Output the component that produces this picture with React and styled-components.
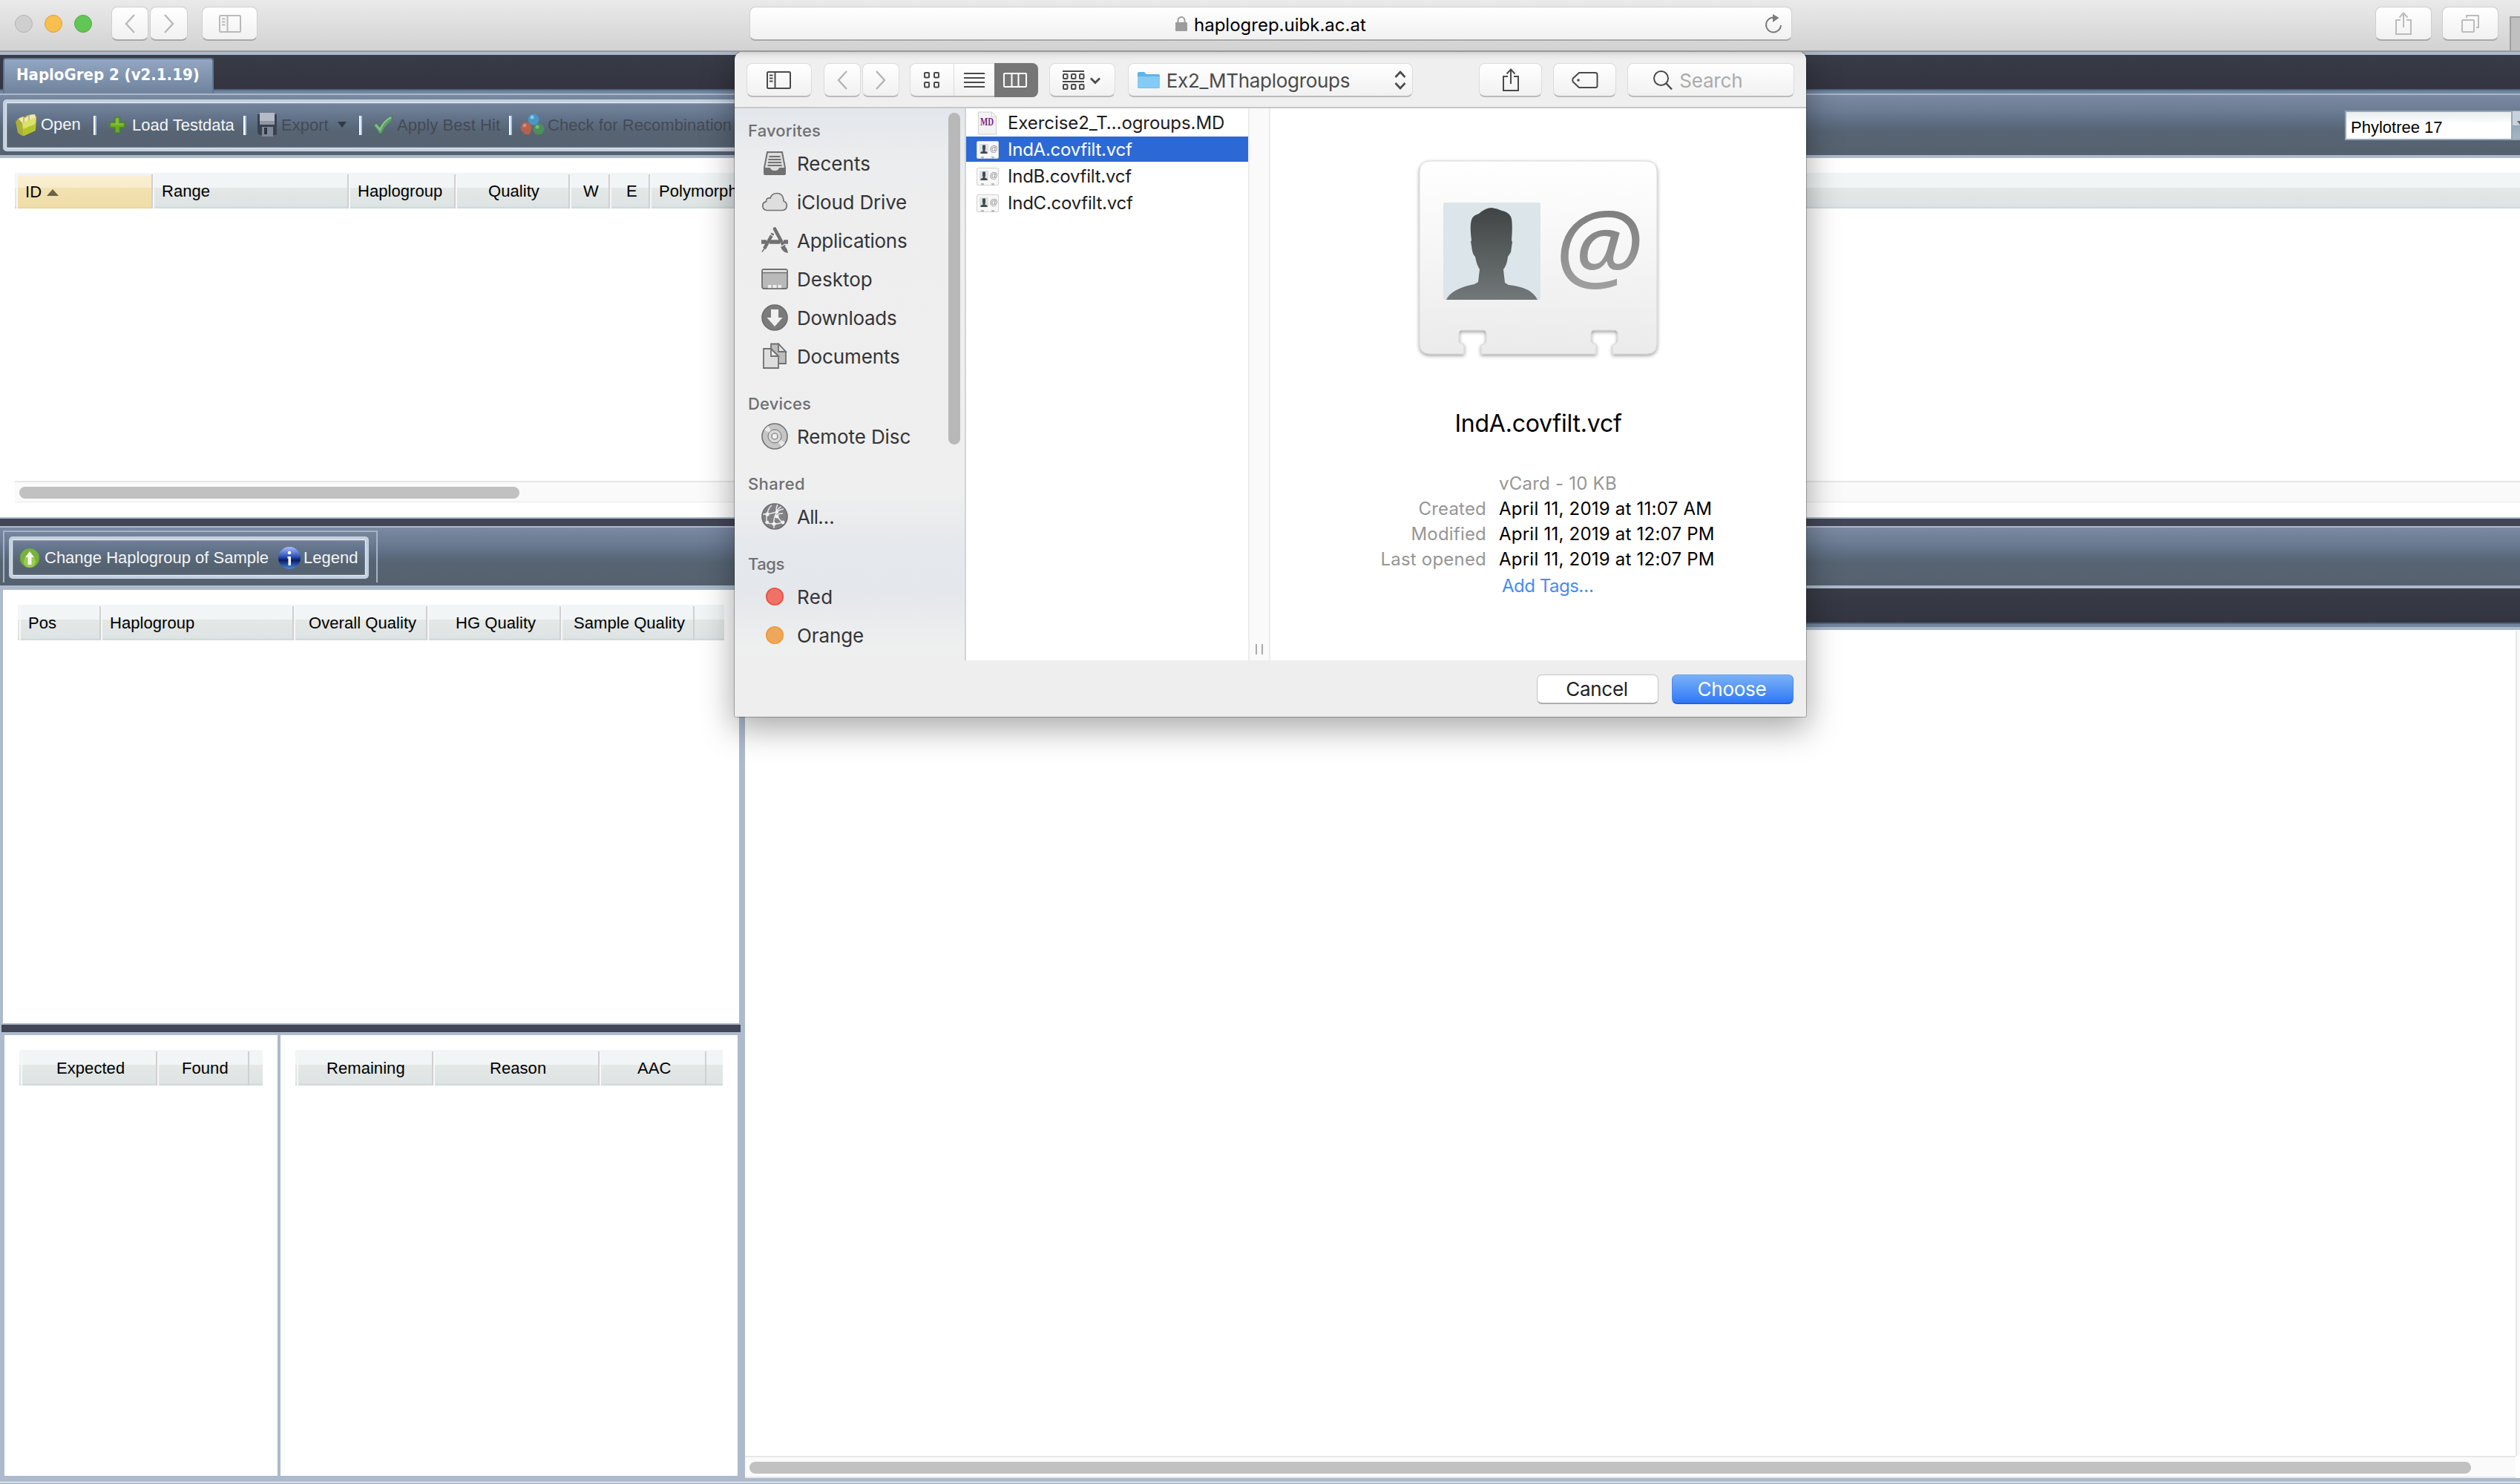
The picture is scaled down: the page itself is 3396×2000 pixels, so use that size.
import React from "react";
import styled, { createGlobalStyle, css } from "styled-components";

const UI = `Inter, "Liberation Sans", sans-serif`;
const APP = `"Liberation Sans", Arial, sans-serif`;
const LINE = "#adbacc";

const Global = createGlobalStyle`
  * { box-sizing: border-box; }
  body { margin: 0; background: #fff; font-family: ${APP}; }
  svg { display: block; flex: none; }
`;

const Screen = styled.div`
  position: relative;
  width: 3396px;
  height: 2000px;
  overflow: hidden;
  display: flex;
  flex-direction: column;
  background: #fff;
`;

/* ---------- text ---------- */
const Label = styled.span`
  white-space: nowrap;
  letter-spacing: ${(p) => p.$ls || 0}px;
`;

/* ---------- browser chrome ---------- */
const BrowserBar = styled.header`
  height: 70px;
  flex: none;
  display: flex;
  align-items: flex-start;
  padding: 9px 0 0 20px;
  background: linear-gradient(#eaeaea, #d2d2d2);
  border-bottom: 2px solid #9a9a9a;
`;
const Lights = styled.div`
  display: flex;
  gap: 16px;
  padding-top: 11px;
  width: 130px;
`;
const Light = styled.i`
  width: 24px;
  height: 24px;
  border-radius: 50%;
  background: ${(p) => p.$fill};
  border: 1px solid ${(p) => p.$edge};
`;
const button = css`
  display: flex;
  align-items: center;
  justify-content: center;
  height: 46px;
  background: linear-gradient(#fff, #f1f1f1);
  border: 1px solid #cfcfcf;
  border-bottom: 2px solid #a9a9a9;
  border-radius: 8px;
`;
const ChromeButton = styled.div`
  ${button}
  width: ${(p) => p.$w}px;
  margin-right: ${(p) => p.$gap || 0}px;
`;
const Address = styled.div`
  ${button}
  width: 1405px;
  margin-left: 663px;
  padding: 0 12px 0 572px;
  justify-content: flex-start;
  font: 24px/45px ${UI};
  color: #000;
`;
const AddressText = styled(Label)`
  margin-left: 8px;
  margin-right: auto;
  padding-top: 3px;
`;
const ChromeRight = styled.div`
  display: flex;
  margin-left: auto;
`;
const TabStub = styled.div`
  width: 14px;
  height: 46px;
  margin-top: 13px;
  background: #c0c0c0;
  border: 2px solid #a0a0a0;
  border-width: 2px 0 0 2px;
`;

/* ---------- web page ---------- */
const TabStrip = styled.div`
  height: 58px;
  flex: none;
  display: flex;
  align-items: flex-end;
  padding-left: 4px;
  background: linear-gradient(#383c47, #33343f 46px, #536480 46px, #536480 48px, #7286a0 48px);
  background-clip: padding-box;
  border-top: 4px solid ${LINE};
  border-bottom: 2px solid #aab8c9;
  ${(p) => p.$plain && css`height: 60px; border-bottom-width: 4px;`}
`;
const Tab = styled.div`
  height: 48px;
  width: 284px;
  padding-left: 16px;
  font: bold 22px/42px "DejaVu Sans Condensed", "DejaVu Sans", sans-serif;
  color: #fff;
  background: linear-gradient(#94a7c2, #7286a0 90%);
  border: 2px solid #5e7695;
  border-bottom: 0;
  border-radius: 4px 4px 0 0;
`;
const bar = css`
  background: linear-gradient(#7b89a3, #6d7d93 25%, #64748c 36%, #566473 60%, #56616f);
`;
const MainBar = styled.div`
  ${bar}
  height: 85px;
  flex: none;
  display: flex;
  align-items: flex-start;
  padding-top: 6px;
  padding-left: 4px;
  border-bottom: 4px solid ${LINE};
`;
const Tools = styled.div`
  display: flex;
  align-items: center;
  height: 70px;
  border: 4px solid #c3d0df;
  border-radius: 5px;
  box-shadow: inset 0 0 0 1px #e8eef6, inset 0 0 3px #fff;
  font-size: 22px;
`;
const ToolRow = styled(Tools)`
  width: 1040px;
  padding: 0 0 3px 12px;
`;
const Tool = styled.div`
  display: flex;
  align-items: center;
  width: ${(p) => p.$w}px;
  flex: none;
  line-height: 26px;
  color: ${(p) => (p.$off ? "#444a55" : "#f4f5f7")};
`;
const ToolText = styled(Label)`
  margin-left: ${(p) => p.$x}px;
  padding-top: ${(p) => p.$y || 0}px;
`;
const Sep = styled.i`
  width: 4px;
  height: 26px;
  margin-top: 2px;
  margin-right: ${(p) => p.$gap}px;
  flex: none;
  background: linear-gradient(90deg, #fff 60%, #9ec2f3 60%);
`;
const Combo = styled.div`
  display: flex;
  margin: 15px 0 0 auto;
`;
const ComboField = styled.div`
  width: 226px;
  height: 40px;
  padding: 4px 0 0 6px;
  border: 2px solid #98a7bc;
  background: linear-gradient(#e8eded, #fff 45%);
  font-size: 22px;
  line-height: 33px;
  color: #000;
`;
const ComboArrow = styled.div`
  width: 10px;
  height: 40px;
  overflow: hidden;
  display: flex;
  align-items: center;
  padding: 0 0 4px 6px;
  border: 1px solid #98a7bc;
  border-width: 1px 0 2px;
  background: linear-gradient(#c9d2dc 50%, #94a6b8 50%, #a5b6c6);
`;
const GridArea = styled.section`
  height: 484px;
  flex: none;
  display: flex;
  flex-direction: column;
  justify-content: space-between;
  padding: 20px 0 20px 20px;
`;
const Head = styled.div`
  display: flex;
  height: 48px;
  flex: none;
  width: ${(p) => (p.$w ? p.$w + "px" : "auto")};
  padding-left: 2px;
  background: linear-gradient(#f1f5f6 20px, #e4e8e6 20px, #dee4e4 45px, #d2dbdb 46px);
`;
const HeadCell = styled.div`
  width: ${(p) => p.$w}px;
  flex: none;
  margin-top: 2px;
  padding-left: ${(p) => p.$x}px;
  border-left: 2px solid #f7f7f7;
  border-right: 2px solid #d0d0d0;
  font-size: 22px;
  line-height: 45px;
  letter-spacing: 0.06px;
  white-space: nowrap;
  color: #000;
  ${(p) =>
    p.$sorted &&
    css`
      display: flex;
      align-items: center;
      background: linear-gradient(#eef2f8 2px, #faefd4 2px, #f8ecca 18px, #f3e2b1 18px, #efdda9 44px, #e8d193);
    `}
`;
const SortArrow = styled.i`
  margin: 3px 0 0 7px;
  border: 8px solid transparent;
  border-top: 0;
  border-bottom: 9px solid #6e6149;
`;
const ScrollTrack = styled.div`
  display: flex;
  flex: none;
  height: ${(p) => p.$h || 29}px;
  padding: 6px 0 0 ${(p) => p.$x}px;
  background: #fafafa;
  border-top: 2px solid #e7e7e7;
  border-bottom: ${(p) => p.$bb || 1}px solid #e9e9e9;
`;
const ScrollThumb = styled.i`
  width: ${(p) => p.$w}px;
  height: 16px;
  border-radius: 8px;
  background: #c1c1c1;
`;
const Splitter = styled.div`
  height: 14px;
  flex: none;
  background: #424555;
  border: 2px solid ${LINE};
  border-width: 2px 0;
`;
const SecondBar = styled.div`
  ${bar}
  height: 78px;
  flex: none;
  display: flex;
  padding: 4px 0 0 4px;
`;
const ToolFrame = styled.div`
  width: 505px;
  height: 70px;
  padding: 6px;
  border: 2px solid #a5b3c7;
  border-bottom: 0;
`;
const SampleTools = styled(Tools)`
  width: 485px;
  height: 57px;
  padding-left: 10px;
`;
const Lower = styled.div`
  flex: 1;
  display: flex;
  min-height: 0;
`;
const LeftCol = styled.div`
  width: 1004px;
  flex: none;
  display: flex;
  flex-direction: column;
  background: ${LINE};
  padding-top: 6px;
`;
const HitPanel = styled.div`
  height: 584px;
  flex: none;
  margin: 0 8px 0 4px;
  padding: 20px;
  background: #fff;
`;
const DarkSplit = styled.div`
  height: 10px;
  flex: none;
  margin: 2px 6px 4px 2px;
  background: #424555;
`;
const Pair = styled.div`
  flex: 1;
  display: flex;
  gap: 4px;
  padding: 0 10px 8px 6px;
`;
const PairPanel = styled.div`
  width: ${(p) => p.$w}px;
  padding: 20px;
  background: #fff;
`;
const RightCol = styled.div`
  flex: 1;
  display: flex;
  flex-direction: column;
`;
const Canvas = styled.div`
  flex: 1;
  display: flex;
  justify-content: flex-end;
  padding-top: 1px;
`;
const VTrack = styled.div`
  width: 6px;
  background: #f9f9f9;
  border-left: 2px solid #e7e7e7;
`;
const CanvasFoot = styled.div`
  padding-right: 6px;
  border-bottom: 5px solid ${LINE};
  background: #fff;
`;
const PageEnd = styled.div`
  height: 3px;
  flex: none;
  background: ${LINE};
  border-top: 1px solid #fff;
`;

/* ---------- file dialog ---------- */
const DialogLayer = styled.div`
  position: absolute;
  left: 990px;
  top: 70px;
  width: 1444px;
  clip-path: inset(0 -120px -140px -120px);
`;
const Dialog = styled.div`
  height: 896px;
  display: flex;
  flex-direction: column;
  border-radius: 10px 10px 2px 2px;
  background: #eee;
  overflow: hidden;
  font-family: ${UI};
`;
const DialogShadow = styled.div`
  border-radius: 10px 10px 2px 2px;
  box-shadow: 0 0 0 1px rgba(0, 0, 0, 0.28), 0 14px 44px 2px rgba(0, 0, 0, 0.34);
`;
const DialogBar = styled.div`
  height: 76px;
  flex: none;
  display: flex;
  align-items: flex-start;
  padding: 15px 16px 0;
  background: linear-gradient(#d4d4d4, #e6e6e6 5px, #efefef 11px);
  border-bottom: 2px solid #c8c8c8;
`;
const DlgButton = styled(ChromeButton)`
  border-color: #dcdcdc #dcdcdc #bababa;
`;
const Popup = styled(DlgButton)`
  justify-content: flex-start;
  padding: 0 8px 0 12px;
  font-size: 26px;
  color: #4b4b4b;
`;
const PopupText = styled(Label)`
  margin: 0 auto 0 9px;
  padding-top: 2px;
`;
const SearchBox = styled(DlgButton)`
  justify-content: flex-start;
  padding-left: 33px;
  font-size: 26px;
  color: #ababab;
`;
const SearchText = styled(Label)`
  margin-left: 8px;
  padding-top: 2px;
`;
const Segments = styled(DlgButton)`
  padding: 0;
`;
const Segment = styled.div`
  flex: 0 0 ${(p) => p.$w}px;
  height: ${(p) => (p.$on ? 46 : 43)}px;
  display: flex;
  align-items: center;
  justify-content: center;
  border-left: ${(p) => (p.$line ? 1 : 0)}px solid #dcdcdc;
  ${(p) =>
    p.$on &&
    css`
      margin: -1px -1px -2px 0;
      padding-right: 3px;
      border-radius: 0 8px 8px 0;
      background: #767676;
    `}
`;
const DialogBody = styled.div`
  flex: 1;
  display: flex;
`;
const Sidebar = styled.nav`
  width: 312px;
  display: flex;
  border-right: 2px solid #d2d4d6;
  background: linear-gradient(#e3e6eb, #eaecee 60px, #eee 130px, #eeefee 520px, #e5e8ec 590px, #e4e7eb 650px, #eeefef 725px, #eee);
`;
const SideList = styled.div`
  flex: 1;
`;
const SideHeading = styled.div`
  height: ${(p) => (p.$first ? 48 : 56)}px;
  padding: ${(p) => (p.$first ? 13 : 21)}px 0 0 18px;
  font-size: 22px;
  font-weight: 500;
  line-height: 34px;
  color: #6f6f72;
`;
const SideItem = styled.div`
  height: 52px;
  display: flex;
  align-items: center;
  padding-left: 36px;
  gap: 12px;
  font-size: 26px;
  color: #353537;
`;
const SideThumb = styled.i`
  width: 16px;
  height: 447px;
  margin: 6px 6px 0 0;
  border-radius: 8px;
  background: #b8b8b9;
`;
const Files = styled.div`
  width: 380px;
  padding-top: 2px;
  background: #fff;
`;
const File = styled.div`
  height: 36px;
  font-size: 24px;
  color: ${(p) => (p.$on ? "#fff" : "#1d1d1d")};
  background: linear-gradient(${(p) => (p.$on ? "#2c69d5, #2c69d5" : "#fff, #fff")}) no-repeat 0 0 / 100% 34px;
  display: flex;
  align-items: center;
  padding: 0 0 1px 13px;
  gap: 11px;
`;
const Gutter = styled.div`
  width: 30px;
  display: flex;
  align-items: flex-end;
  justify-content: center;
  gap: 6px;
  padding-bottom: 8px;
  background: #fafafa;
  border: 2px solid #ececec;
  border-width: 0 2px;
`;
const Grip = styled.i`
  width: 2px;
  height: 14px;
  background: #a9a9a9;
`;
const Preview = styled.div`
  flex: 1;
  display: flex;
  flex-direction: column;
  align-items: center;
  padding-top: 62px;
  background: #fff;
`;
const PreviewName = styled.div`
  margin-top: 57px;
  height: 80px;
  font-size: 32px;
  line-height: 40px;
  color: #000;
`;
const Facts = styled.dl`
  display: grid;
  grid-template-columns: 291px 1fr;
  column-gap: 17px;
  grid-auto-rows: 34px;
  width: 722px;
  margin: 4px 0 0;
  font-size: 24px;
  line-height: 34px;
`;
const Term = styled.dt`
  text-align: right;
  letter-spacing: 0.2px;
  color: #969696;
`;
const Value = styled.dd`
  margin: 0;
  letter-spacing: ${(p) => (p.$link ? -0.5 : 0.23)}px;
  color: ${(p) => p.$c || "#000"};
  padding: ${(p) => (p.$link ? "2px 0 0 4px" : 0)};
`;
const DialogFoot = styled.div`
  height: 76px;
  flex: none;
  display: flex;
  justify-content: flex-end;
  gap: 18px;
  padding: 19px 17px 0;
`;
const Action = styled.div`
  width: 164px;
  height: 40px;
  padding-right: 2px;
  border-radius: 7px;
  text-align: center;
  font-size: 26px;
  line-height: 38px;
  letter-spacing: -0.27px;
  color: #222;
  background: #fff;
  border: 1px solid #c6c6c6;
  border-bottom: 2px solid #adadad;
  ${(p) =>
    p.$primary &&
    css`
      color: #fff;
      background: linear-gradient(#7bb1f6, #2f79f7);
      border-color: #66a0f0 #4587f3 #2560e6;
    `}
`;

/* ---------- icons ---------- */
const Chevron = ({ left, color }) => (
  <svg width="16" height="28" viewBox="0 0 16 28" fill="none" stroke={color} strokeWidth="2.4">
    <path d={left ? "M14 2 3 14l11 12" : "M2 2l11 12L2 26"} />
  </svg>
);
const SidebarIcon = ({ color, w = 30 }) => (
  <svg width={w} height="24" viewBox={`0 0 ${w} 24`} fill="none" stroke={color} strokeWidth="2">
    <rect x="1" y="1" width={w - 2} height="22" rx="1.5" />
    <path d="M11.500 1v22M4 5.500h4.500M4 9.500h4.500M4 13.500h4.500" />
  </svg>
);
const Lock = () => (
  <svg width="18" height="22" viewBox="0 0 18 22">
    <rect x="1" y="9" width="16" height="12" rx="1" fill="#9c9c9c" />
    <path d="M4.500 10V6.500a4.500 4.500 0 0 1 9 0V10" fill="none" stroke="#9c9c9c" strokeWidth="2" />
  </svg>
);
const Reload = () => (
  <svg width="24" height="28" viewBox="0 0 24 28">
    <path d="M12 5.500A10 10 0 1 0 22 16" fill="none" stroke="#7c7c7c" strokeWidth="2" />
    <path d="M11 1v11l8.500-6z" fill="#7c7c7c" />
  </svg>
);
const Share = ({ color }) => (
  <svg width="24" height="32" viewBox="0 0 24 32" fill="none" stroke={color} strokeWidth="2">
    <path d="M8 11H2v19h20V11h-6M12 21V2M6.500 7.500 12 1.500l5.500 6" />
  </svg>
);
const TabsIcon = () => (
  <svg width="26" height="26" viewBox="0 0 26 26" fill="none" stroke="#bcbcbc" strokeWidth="2">
    <rect x="2" y="8" width="16" height="16" rx="1" />
    <path d="M8 5V2h16v16h-3" />
  </svg>
);
const TagIcon = () => (
  <svg width="36" height="22" viewBox="0 0 36 22" fill="none" stroke="#4a4a4a" strokeWidth="2">
    <path d="M10 1h22q2.500 0 2.500 2.500v15q0 2.500-2.500 2.500H10L2 13.500q-1.500-2.500 0-5z" />
    <circle cx="9" cy="11" r="1.800" fill="#4a4a4a" stroke="none" />
  </svg>
);
const Magnifier = () => (
  <svg width="28" height="28" viewBox="0 0 28 28" fill="none" stroke="#4a4a4a" strokeWidth="2">
    <circle cx="11.500" cy="11.500" r="9.500" />
    <path d="M18.500 18.500 26 26.500" strokeWidth="2.400" />
  </svg>
);
const GridIcon = () => (
  <svg width="22" height="22" viewBox="0 0 22 22" fill="none" stroke="#4a4a4a" strokeWidth="2">
    {[[1, 1], [14, 1], [1, 14], [14, 14]].map(([x, y]) => (
      <rect key={x + "-" + y} x={x} y={y} width="6" height="6.500" rx="1" />
    ))}
  </svg>
);
const ListIcon = () => (
  <svg width="28" height="22" viewBox="0 0 28 22" stroke="#4a4a4a" strokeWidth="2">
    <path d="M0 2h28M0 8h28M0 14h28M0 20h28" />
  </svg>
);
const ColumnsIcon = () => (
  <svg width="32" height="20" viewBox="0 0 32 20" fill="none" stroke="#fff" strokeWidth="2">
    <rect x="1" y="1" width="30" height="18" rx="1" />
    <path d="M11.500 1v18M20.500 1v18" />
  </svg>
);
const GroupIcon = () => (
  <svg width="52" height="28" viewBox="0 0 52 28" fill="none" stroke="#4a4a4a" strokeWidth="2">
    <path d="M0 2h29M0 16h29" />
    {[1, 12, 23].map((x) => (
      <React.Fragment key={x}>
        <rect x={x} y="6" width="5.500" height="6" rx="1" />
        <rect x={x} y="20" width="5.500" height="6" rx="1" />
      </React.Fragment>
    ))}
    <path d="M38 11.500l6 6 6-6" strokeWidth="2.800" />
  </svg>
);
const FolderIcon = () => (
  <svg width="30" height="24" viewBox="0 0 30 24">
    <path d="M0 3Q0 1 2 1h7l3 3h16q2 0 2 2v15q0 2-2 2H2q-2 0-2-2z" fill="#5fb4e6" />
    <path d="M0 7h30v13.500q0 2-2 2H2q-2 0-2-2z" fill="#84cbf5" />
  </svg>
);
const UpDown = () => (
  <svg width="16" height="26" viewBox="0 0 16 26" fill="none" stroke="#4a4a4a" strokeWidth="2.600">
    <path d="M1.500 9 8 2l6.500 7M1.500 17 8 24l6.500-7" />
  </svg>
);
const RecentsIcon = () => (
  <svg width="36" height="36" viewBox="0 0 36 36">
    <path d="M8 3h20l4 21v8q0 1-1 1H5q-1 0-1-1v-8z" fill="#dedede" stroke="#717171" strokeWidth="2" />
    <path d="M4 24h8q1 4 6 4t6-4h8v8q0 1-1 1H5q-1 0-1-1z" fill="#717171" />
    <path d="M10.500 9h15M9.500 13h17M9 17h18M8.500 21h19" stroke="#717171" strokeWidth="1.800" />
  </svg>
);
const CloudIcon = () => (
  <svg width="36" height="36" viewBox="0 0 36 36">
    <path d="M7 29.500a6 6 0 0 1-.5-11.800Q6.500 12 12 13q2-6.500 9-6.500 8 0 9 9-.2 1 0 1.500a6.500 6.500 0 0 1-1 12.500z" fill="#dedede" stroke="#717171" strokeWidth="1.700" />
  </svg>
);
const AppsIcon = () => (
  <svg width="36" height="36" viewBox="0 0 36 36" fill="none" stroke="#717171">
    <path d="M0 20h7M11 20h14M30 20h6" strokeWidth="5.500" />
    <path d="M18 2.500 30 25" strokeWidth="4.600" strokeLinecap="round" />
    <path d="M15.500 8.500 4 29" strokeWidth="4.400" />
    <path d="M5 28 .8 33.500M29 25q5 3 6 9-6-1-8-7z" strokeWidth="1.500" fill="#717171" />
    <path d="M11.500 9.500l5 3M27 26l5-3" stroke="#eee" strokeWidth="1.200" />
  </svg>
);
const DesktopIcon = () => (
  <svg width="36" height="36" viewBox="0 0 36 36">
    <rect x="1" y="5" width="34" height="26" rx="2.500" fill="#b9b9b9" stroke="#717171" strokeWidth="1.800" />
    <path d="M2 6h32v3H2z" fill="#e8e8e8" />
    <path d="M1 9.500h34" stroke="#717171" strokeWidth="1.400" />
    <path d="M9 26h18v4.200H9z" fill="#ededed" />
    <path d="M14.500 26v4M21.500 26v4" stroke="#999" strokeWidth="1.400" />
  </svg>
);
const DownloadsIcon = () => (
  <svg width="36" height="36" viewBox="0 0 36 36">
    <circle cx="18" cy="18" r="17" fill="#7b7b7b" stroke="#6b6b6b" strokeWidth="1.600" />
    <path d="M13 7h10v11h5.500L18 30 7.500 18H13z" fill="#efefef" />
  </svg>
);
const DocumentsIcon = () => (
  <svg width="36" height="36" viewBox="0 0 36 36" stroke="#717171" strokeWidth="1.800" strokeLinejoin="miter">
    <path d="M13 1.500h10L33 12v16H13z" fill="#bdbdbd" />
    <path d="M23 1.500V12h10z" fill="#e3e3e3" />
    <path d="M3 8h10l10 10v16H3z" fill="#dedede" />
    <path d="M13 8v10h10z" fill="#efefef" />
  </svg>
);
const DiscIcon = () => (
  <svg width="36" height="36" viewBox="0 0 36 36" fill="none" stroke="#717171">
    <circle cx="18" cy="18" r="17" fill="#c6c6c6" strokeWidth="1.600" />
    <path d="M18 18 4 9l5-5zM18 18l14 9-5 5z" fill="#eaeaea" stroke="none" />
    <circle cx="18" cy="18" r="9" fill="#d9d9d9" strokeWidth="1" />
    <circle cx="18" cy="18" r="4" fill="#efefef" strokeWidth="1.200" />
  </svg>
);
const NetworkIcon = () => (
  <svg width="36" height="36" viewBox="0 0 36 36" fill="none">
    <circle cx="18" cy="18" r="17" fill="#818184" stroke="#6b6b6e" strokeWidth="1.600" />
    <g stroke="#e9eaec" strokeWidth="1.500">
      <path d="M2 15q10 0 18-3 7-4 10-4M8 15Q9 7 14 3M8 15q-2 7 0 13M21 12q-2-5 1-10M21 12q-5 8-4 16v6M21 17q5 8 8 9M29 14q-8 0-9 4M5 26q6 2 12 2 8 0 14-3M20 12q4-7 7-7" />
    </g>
    <g fill="#f1f1f3">
      <circle cx="8" cy="15" r="2.600" /><circle cx="21" cy="12" r="2.200" /><circle cx="21" cy="18" r="2.600" />
      <circle cx="8" cy="26" r="2.200" /><circle cx="17" cy="28" r="2.600" /><circle cx="29" cy="26" r="2.400" />
    </g>
  </svg>
);
const TagDot = ({ fill, edge }) => (
  <svg width="36" height="36" viewBox="0 0 36 36">
    <circle cx="18" cy="18" r="11.200" fill={fill} stroke={edge} strokeWidth="1.600" />
  </svg>
);
const MdText = styled.text`
  font: bold 14px "Liberation Serif", serif;
  fill: #7d1f8d;
`;
const MdIcon = () => (
  <svg width="32" height="32" viewBox="0 0 32 32">
    <path d="M3.500 1h18l6 6v24h-24z" fill="#f3f3f3" stroke="#cfcfcf" />
    <path d="M21.500 1v6h6z" fill="#fff" stroke="#cfcfcf" />
    <MdText x="6" y="19" textLength="18" lengthAdjust="spacingAndGlyphs">MD</MdText>
  </svg>
);
const SmallAt = styled.text`
  font: 11px "Liberation Sans", sans-serif;
  fill: #8a8a8a;
`;
const CardIcon = () => (
  <svg width="32" height="32" viewBox="0 0 32 32">
    <rect x="1.500" y="4.500" width="29" height="23" rx="1.500" fill="#f8f8f8" stroke="#d2d2d2" />
    <rect x="5" y="8" width="12" height="13" fill="#d9e2e8" />
    <path d="M9 9.500h4v5.500l-.8 2.500 3.300 1.500v2H6.500v-2l3.300-1.500L9 15z" fill="#444b4d" />
    <SmallAt x="18.500" y="17.500">@</SmallAt>
    <path d="M7 25h4v1l-1 2H8l-1-2zM21 25h4v1l-1 2h-2l-1-2z" fill="#b5bac0" />
  </svg>
);
const BigAt = styled.text`
  font: italic 400 131px "Noto Sans", "Open Sans", sans-serif;
  fill: url(#atShade);
`;
const ContactCard = () => (
  <svg width="344" height="286" viewBox="0 0 344 286">
    <defs>
      <linearGradient id="cardShade" x2="0" y2="1"><stop stopColor="#fff" /><stop offset="1" stopColor="#ebebeb" /></linearGradient>
      <linearGradient id="headShade" x2="0" y2="1"><stop stopColor="#404445" /><stop offset="1" stopColor="#727879" /></linearGradient>
      <linearGradient id="atShade" x2="0" y2="1"><stop offset=".2" stopColor="#7b7b7b" /><stop offset=".9" stopColor="#a2a2a2" /></linearGradient>
      <filter id="cardDrop" x="-10%" y="-10%" width="120%" height="120%"><feDropShadow dx="0" dy="2" stdDeviation="2.500" floodOpacity=".4" /></filter>
    </defs>
    <path
      filter="url(#cardDrop)"
      d="M27 9H317q15 0 15 15V255q0 14-14 14H272V257q8-2 7-8v-7q0-5-5-5H248q-5 0-5 5v9q0 4 7 5v13H95V257q7-1 7-6v-9q0-5-5-5H70q-5 0-5 5v9q0 4 7 5v13H26q-14 0-14-14V24Q12 9 27 9z"
      fill="url(#cardShade)"
      stroke="#cfcfcf"
      strokeWidth=".8"
    />
    <rect x="44" y="65" width="131" height="131" rx="2" fill="#dce5ea" />
    <path
      d="M48 196q5-12 29-19l9-2 5-3 2-17q-4-6-6-17-4-3-5-15l-1-5 1-2q-3-22 1-30 2-4 9-6 9-8 17-8 8 1 14 4 9 2 12 8 3 6 1 32l1 2-2 14-4 6q-1 11-6 17l2 18 5 3q31 3 39 20z"
      fill="url(#headShade)"
    />
    <BigAt x="195" y="170" textLength="117" lengthAdjust="spacingAndGlyphs">@</BigAt>
  </svg>
);
const OpenIcon = () => (
  <svg width="32" height="32" viewBox="0 0 32 32">
    <path d="M3 9l6-4 4 2 3-4 5 1 3-2 5 2-1 20-17 7-5-3z" fill="#b9a43c" />
    <path d="M5 8l7-3 2 2 5-4 8-1 1 5-17 8z" fill="#efe8ae" />
    <path d="M12 5v9M19 3v8" stroke="#b3a04a" strokeWidth="1.200" />
    <path d="M1 11l3-1 6 4 3 17-3 0L4 27z" fill="#a9b035" />
    <path d="M10 14l19-8-2 18-15 7z" fill="#d9e168" /><path d="M11 22l17-7-1 9-15 7z" fill="#b4c52b" />
  </svg>
);
const PlusIcon = () => (
  <svg width="26" height="28" viewBox="0 0 26 28">
    <path d="M10 4h6.500v7H23v7h-6.500v7H10v-7H3v-7h7z" fill="#69ad1f" stroke="#4c8130" strokeWidth="1.500" strokeLinejoin="round" />
    <path d="M11 5.500h3.500v7H21v2H5v-2h6z" fill="#86c136" />
  </svg>
);
const DiskIcon = () => (
  <svg width="30" height="32" viewBox="0 0 30 32">
    <path d="M2 2h26v26q0 2-2 2H5l-3-3z" fill="#3a4250" />
    <path d="M5 0h20v16H5z" fill="#b4bac6" /><path d="M5 11h20v5H5z" fill="#8e97a6" />
    <path d="M8 19h15v13H8z" fill="#7f8898" /><path d="M11 20h4v9h-4z" fill="#2e3541" />
  </svg>
);
const CheckIcon = () => (
  <svg width="30" height="28" viewBox="0 0 30 28">
    <path d="M2 15l5-3 4 5Q17 6 28 2l-1 6Q17 16 13 26h-3Q7 19 2 15z" fill="#5f9c6f" stroke="#3f8152" />
    <path d="M5 14l6 7Q16 9 26 4" fill="none" stroke="#8fc38a" strokeWidth="2" />
  </svg>
);
const RecombIcon = () => (
  <svg width="34" height="30" viewBox="0 0 34 30">
    <circle cx="8" cy="19" r="7.500" fill="#b4614f" /><path d="M3 22l3 6h6l3-5z" fill="#b4614f" /><circle cx="6" cy="16" r="2.500" fill="#cc8f7c" />
    <circle cx="25" cy="21" r="7.500" fill="#4b8f5a" /><circle cx="23" cy="18" r="2.500" fill="#7fb586" />
    <circle cx="18" cy="8" r="7.500" fill="#4a97c6" /><circle cx="16" cy="5" r="2.500" fill="#8cc6e4" />
  </svg>
);
const Caret = ({ color = "#333943" }) => (
  <svg width="12" height="8" viewBox="0 0 12 8"><path d="M0 0h12L6 8z" fill={color} /></svg>
);
const UpIcon = () => (
  <svg width="28" height="30" viewBox="0 0 28 30">
    <circle cx="14" cy="15" r="13" fill="#78b23c" stroke="#63994a" /><circle cx="14" cy="20" r="8" fill="#a6d75b" opacity=".7" />
    <path d="M14 6l6 8h-3.500v10h-5V14H8z" fill="#f5f8ee" />
  </svg>
);
const InfoIcon = () => (
  <svg width="32" height="32" viewBox="0 0 32 32">
    <defs><linearGradient id="infoShade" x2="0" y2="1"><stop stopColor="#a9c0ff" /><stop offset=".45" stopColor="#2a4fb5" /><stop offset=".6" stopColor="#081b66" /><stop offset="1" stopColor="#4b8be0" /></linearGradient></defs>
    <circle cx="16" cy="16" r="15" fill="url(#infoShade)" />
    <circle cx="16" cy="9" r="2.300" fill="#fff" /><path d="M13.500 14H18v12h-3.500v-9.500h-1z" fill="#fff" />
  </svg>
);

/* ---------- content ---------- */
const mainColumns = [
  { text: "ID", w: 184, x: 10, sorted: true },
  { text: "Range", w: 264, x: 10 },
  { text: "Haplogroup", w: 144, x: 10 },
  { text: "Quality", w: 154, x: 42 },
  { text: "W", w: 54, x: 16 },
  { text: "E", w: 54, x: 20 },
  { text: "Polymorphisms", w: 300, x: 10 },
];
const hitColumns = [
  { text: "Pos", w: 110, x: 10 },
  { text: "Haplogroup", w: 260, x: 10 },
  { text: "Overall Quality", w: 180, x: 18 },
  { text: "HG Quality", w: 180, x: 36 },
  { text: "Sample Quality", w: 180, x: 15 },
];
const expectedColumns = [
  { text: "Expected", w: 184, x: 46 },
  { text: "Found", w: 124, x: 31 },
];
const remainingColumns = [
  { text: "Remaining", w: 184, x: 38 },
  { text: "Reason", w: 224, x: 74 },
  { text: "AAC", w: 144, x: 49 },
];
const GridHead = ({ columns, width }) => (
  <Head $w={width}>
    {columns.map((c) => (
      <HeadCell key={c.text} $w={c.w} $x={c.x} $sorted={c.sorted}>
        {c.text}
        {c.sorted && <SortArrow />}
      </HeadCell>
    ))}
  </Head>
);

/* groups of [icon, name, tracking] */
const sideGroups = [
  ["Favorites", 0.17, [
    [RecentsIcon, "Recents", 0], [CloudIcon, "iCloud Drive", -0.19], [AppsIcon, "Applications", -0.26],
    [DesktopIcon, "Desktop", 0], [DownloadsIcon, "Downloads", -0.27], [DocumentsIcon, "Documents", -0.14],
  ]],
  ["Devices", 0.14, [[DiscIcon, "Remote Disc", -0.1]]],
  ["Shared", 0.4, [[NetworkIcon, "All…", -0.8]]],
  ["Tags", -0.46, [
    [() => <TagDot fill="#f07167" edge="#ec4a3e" />, "Red", 0.4],
    [() => <TagDot fill="#eda85d" edge="#f0982f" />, "Orange", -0.12],
  ]],
];
const files = [
  [MdIcon, "Exercise2_T…ogroups.MD", -0.07],
  [CardIcon, "IndA.covfilt.vcf", -0.24],
  [CardIcon, "IndB.covfilt.vcf", -0.24],
  [CardIcon, "IndC.covfilt.vcf", -0.24],
];

const OpenDialog = () => (
  <DialogLayer>
    <DialogShadow>
      <Dialog>
        <DialogBar>
          <DlgButton $w={88} $gap={16}><SidebarIcon color="#4a4a4a" w={33} /></DlgButton>
          <DlgButton $w={50} $gap={2}><Chevron left color="#b5b5b5" /></DlgButton>
          <DlgButton $w={50} $gap={14}><Chevron color="#b5b5b5" /></DlgButton>
          <Segments $w={173} $gap={15}>
            <Segment $w={58}><GridIcon /></Segment>
            <Segment $w={55} $line><ListIcon /></Segment>
            <Segment $w={59} $on><ColumnsIcon /></Segment>
          </Segments>
          <DlgButton $w={89} $gap={17}><GroupIcon /></DlgButton>
          <Popup $w={385} $gap={89}>
            <FolderIcon />
            <PopupText $ls={-0.29}>Ex2_MThaplogroups</PopupText>
            <UpDown />
          </Popup>
          <DlgButton $w={85} $gap={15}><Share color="#4a4a4a" /></DlgButton>
          <DlgButton $w={85} $gap={15}><TagIcon /></DlgButton>
          <SearchBox $w={225}><Magnifier /><SearchText $ls={-0.18}>Search</SearchText></SearchBox>
        </DialogBar>
        <DialogBody>
          <Sidebar>
            <SideList>
              {sideGroups.map(([title, spacing, items], i) => (
                <React.Fragment key={title}>
                  <SideHeading $first={i === 0}><Label $ls={spacing}>{title}</Label></SideHeading>
                  {items.map(([Icon, name, ls]) => (
                    <SideItem key={name}><Icon /><Label $ls={ls}>{name}</Label></SideItem>
                  ))}
                </React.Fragment>
              ))}
            </SideList>
            <SideThumb />
          </Sidebar>
          <Files>
            {files.map(([Icon, name, ls], i) => (
              <File key={name} $on={i === 1}><Icon /><Label $ls={ls}>{name}</Label></File>
            ))}
          </Files>
          <Gutter><Grip /><Grip /></Gutter>
          <Preview>
            <ContactCard />
            <PreviewName><Label $ls={-0.22}>IndA.covfilt.vcf</Label></PreviewName>
            <Facts>
              <Term /><Value $c="#969696">vCard - 10 KB</Value>
              <Term>Created</Term><Value>April 11, 2019 at 11:07 AM</Value>
              <Term>Modified</Term><Value>April 11, 2019 at 12:07 PM</Value>
              <Term>Last opened</Term><Value>April 11, 2019 at 12:07 PM</Value>
              <Term /><Value $c="#4a8af5" $link>Add Tags…</Value>
            </Facts>
          </Preview>
        </DialogBody>
        <DialogFoot>
          <Action>Cancel</Action>
          <Action $primary>Choose</Action>
        </DialogFoot>
      </Dialog>
    </DialogShadow>
  </DialogLayer>
);

export default function App() {
  return (
    <Screen>
      <Global />
      <BrowserBar>
        <Lights>
          <Light $fill="#cfcfcf" $edge="#b2b2b2" />
          <Light $fill="#f6bf4e" $edge="#d9a33c" />
          <Light $fill="#62c654" $edge="#52a942" />
        </Lights>
        <ChromeButton $w={50} $gap={2}><Chevron left color="#b9b9b9" /></ChromeButton>
        <ChromeButton $w={51} $gap={19}><Chevron color="#b9b9b9" /></ChromeButton>
        <ChromeButton $w={75}><SidebarIcon color="#b9b9b9" /></ChromeButton>
        <Address>
          <Lock />
          <AddressText>haplogrep.uibk.ac.at</AddressText>
          <Reload />
        </Address>
        <ChromeRight>
          <ChromeButton $w={76} $gap={14}><Share color="#bcbcbc" /></ChromeButton>
          <ChromeButton $w={76} $gap={15}><TabsIcon /></ChromeButton>
          <TabStub />
        </ChromeRight>
      </BrowserBar>

      <TabStrip><Tab><Label>HaploGrep 2 (v2.1.19)</Label></Tab></TabStrip>
      <MainBar>
        <ToolRow>
          <Tool $w={106}><OpenIcon /><ToolText $x={3}>Open</ToolText></Tool>
          <Sep $gap={15} />
          <Tool $w={183}><PlusIcon /><ToolText $x={7} $y={3}>Load Testdata</ToolText></Tool>
          <Sep $gap={13} />
          <Tool $w={139} $off><DiskIcon /><ToolText $x={4} $y={3}>Export</ToolText><ToolText $x={12}><Caret /></ToolText></Tool>
          <Sep $gap={13} />
          <Tool $w={185} $off><CheckIcon /><ToolText $x={4} $y={3} $ls={0.07}>Apply Best Hit</ToolText></Tool>
          <Sep $gap={11} />
          <Tool $w={290} $off><RecombIcon /><ToolText $x={3} $y={3} $ls={0.05}>Check for Recombination</ToolText></Tool>
        </ToolRow>
        <Combo>
          <ComboField>Phylotree 17</ComboField>
          <ComboArrow><Caret color="#666" /></ComboArrow>
        </Combo>
      </MainBar>

      <GridArea>
        <GridHead columns={mainColumns} />
        <ScrollTrack $x={6}><ScrollThumb $w={674} /></ScrollTrack>
      </GridArea>

      <Splitter />
      <SecondBar>
        <ToolFrame>
          <SampleTools>
            <Tool $w={348}><UpIcon /><ToolText $x={6} $y={1}>Change Haplogroup of Sample</ToolText></Tool>
            <Tool $w={120}><InfoIcon /><ToolText $x={3} $y={1}>Legend</ToolText></Tool>
          </SampleTools>
        </ToolFrame>
      </SecondBar>

      <Lower>
        <LeftCol>
          <HitPanel><GridHead columns={hitColumns} width={952} /></HitPanel>
          <DarkSplit />
          <Pair>
            <PairPanel $w={368}><GridHead columns={expectedColumns} width={328} /></PairPanel>
            <PairPanel $w={616}><GridHead columns={remainingColumns} width={576} /></PairPanel>
          </Pair>
        </LeftCol>
        <RightCol>
          <TabStrip $plain />
          <Canvas><VTrack /></Canvas>
          <CanvasFoot><ScrollTrack $x={6} $h={30} $bb={2}><ScrollThumb $w={2320} /></ScrollTrack></CanvasFoot>
        </RightCol>
      </Lower>
      <PageEnd />
      <OpenDialog />
    </Screen>
  );
}
